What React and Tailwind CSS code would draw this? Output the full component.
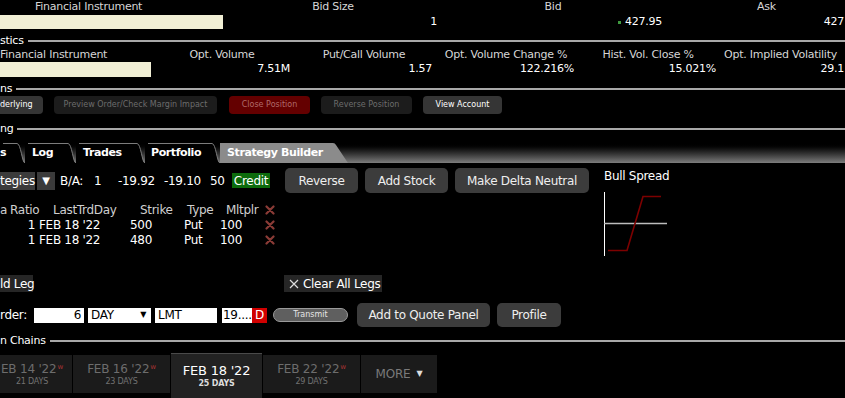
import React from 'react';

const RedX = () => (
  <svg width="10" height="10" viewBox="0 0 10 10">
    <path d="M1.5 1.5 L8.5 8.5 M8.5 1.5 L1.5 8.5" stroke="#8a3b36" strokeWidth="2.2" strokeLinecap="round" />
  </svg>
);

const Section = ({ label }) => (
  <div className="flex h-[14px] items-center">
    <span className="pr-[4px] text-white">{label}</span>
    <div className="h-[2px] flex-1 bg-[#a8a8a8]" />
  </div>
);

const Tab = ({ label, w, className, active }) => (
  <div className={`relative flex h-[20px] shrink-0 items-center font-bold text-white ${className}`}>
    <svg className="absolute left-0 top-0" width={w} height="20" viewBox={`0 0 ${w} 20`}>
      {active ? (
        <path d={`M0 20 L0 0 L${w - 15} 0 Q${w - 13} 0 ${w - 12} 2 L${w} 20 Z`} fill="#8b8b8b" />
      ) : (
        <>
          <path d={`M0 20 L0 0.5 L${w - 8} 0.5 C${w - 4} 0.5 ${w - 3} 20 ${w} 20 Z`} fill="#000" />
          <path d={`M3 0.5 L${w - 8} 0.5 C${w - 4} 0.5 ${w - 3} 20 ${w} 20`} fill="none" stroke="#7c7c7c" />
        </>
      )}
    </svg>
    <span className="relative">{label}</span>
  </div>
);

const Expiry = ({ date, days, className, active, weekly }) => (
  <div
    className={`flex shrink-0 flex-col items-center justify-center ${
      active ? 'h-[45px] border-t border-[#4a4a4a] bg-[#222]' : 'mt-[2px] h-[38px] bg-[#1b1b1b]'
    } ${className}`}
  >
    <div className={`leading-[14px] ${active ? 'text-[13px] text-white' : 'text-[12px] text-[#6d6d6d]'}`}>
      {date}
      {weekly && <sup className="ml-[1px] text-[7px] text-[#a33]">w</sup>}
    </div>
    <div className={`mt-[1px] text-[8px] leading-[10px] ${active ? 'font-bold text-[#ddd]' : 'text-[#727272]'}`}>{days}</div>
  </div>
);

const legs = [
  { strike: '500' },
  { strike: '480' },
];

export default function App() {
  return (
    <div className="h-[398px] w-[845px] overflow-hidden bg-black font-['DejaVu_Sans',sans-serif] text-[11px] tracking-[-0.25px] text-white">
      {/* quote header */}
      <div className="flex h-[15px] items-center whitespace-nowrap text-[#d6d6d6]">
        <div className="w-[223px] shrink-0 pl-[35px]">Financial Instrument</div>
        <div className="w-[220px] shrink-0 text-center">Bid Size</div>
        <div className="w-[220px] shrink-0 text-center">Bid</div>
        <div className="w-[182px] shrink-0 pl-[94px]">Ask</div>
      </div>
      <div className="flex h-[14px] items-center whitespace-nowrap">
        <div className="h-[14px] w-[223px] shrink-0 bg-[#f1efd5]" />
        <div className="w-[220px] shrink-0 pr-[6px] text-right">1</div>
        <div className="flex w-[220px] shrink-0 items-center justify-end pr-[1px]">
          <span className="mr-[4px] h-[3px] w-[3px] bg-[#3f9a3f]" />
          427.95
        </div>
        <div className="w-[182px] shrink-0 pr-[1px] text-right">427</div>
      </div>

      <div className="mt-[5px]">
        <Section label="stics" />
      </div>
      <div className="flex h-[14px] items-center whitespace-nowrap text-[#d6d6d6]">
        <div className="w-[151px] shrink-0">Financial Instrument</div>
        <div className="w-[142px] shrink-0 text-center">Opt. Volume</div>
        <div className="w-[142px] shrink-0 text-center">Put/Call Volume</div>
        <div className="w-[142px] shrink-0 text-center">Opt. Volume Change %</div>
        <div className="w-[142px] shrink-0 text-center">Hist. Vol. Close %</div>
        <div className="w-[126px] shrink-0 pl-[5px]">Opt. Implied Volatility</div>
      </div>
      <div className="flex h-[15px] items-center whitespace-nowrap">
        <div className="h-[15px] w-[151px] shrink-0 bg-[#f1efd5]" />
        <div className="w-[142px] shrink-0 pr-[3px] text-right">7.51M</div>
        <div className="w-[142px] shrink-0 pr-[3px] text-right">1.57</div>
        <div className="w-[142px] shrink-0 pr-[3px] text-right">122.216%</div>
        <div className="w-[142px] shrink-0 pr-[3px] text-right">15.021%</div>
        <div className="w-[126px] shrink-0 pr-[1px] text-right">29.1</div>
      </div>

      <div className="mt-[5px]">
        <Section label="ns" />
      </div>
      <div className="flex h-[18px] items-center whitespace-nowrap text-[8px] tracking-normal">
        <div className="flex h-[18px] w-[43px] shrink-0 items-center rounded-r-[4px] bg-[#353535] text-white">derlying</div>
        <div className="ml-[11px] flex h-[18px] w-[163px] shrink-0 items-center justify-center rounded-[4px] bg-[#1c1c1c] text-[#6c6c6c]">
          Preview Order/Check Margin Impact
        </div>
        <div className="ml-[12px] flex h-[18px] w-[81px] shrink-0 items-center justify-center rounded-[4px] bg-[#640000] text-[#b06a6a]">
          Close Position
        </div>
        <div className="ml-[11px] flex h-[18px] w-[91px] shrink-0 items-center justify-center rounded-[4px] bg-[#1c1c1c] text-[#6c6c6c]">
          Reverse Position
        </div>
        <div className="ml-[11px] flex h-[18px] w-[79px] shrink-0 items-center justify-center rounded-[4px] bg-[#353535] text-white">
          View Account
        </div>
      </div>

      <div className="mt-[8px]">
        <Section label="ng" />
      </div>

      {/* tab strip */}
      <div className="flex h-[27px] items-end bg-linear-to-b from-black from-25% to-[#7e7e7e] text-[11px] tracking-[-0.4px]">
        <Tab label="s" w={25} className="w-[25px]" />
        <Tab label="Log" w={51} className="w-[51px] pl-[7px]" />
        <Tab label="Trades" w={69} className="w-[69px] pl-[7px]" />
        <Tab label="Portfolio" w={75} className="w-[75px] pl-[6px]" />
        <Tab label="Strategy Builder" w={128} className="w-[128px] pl-[7px]" active />
      </div>

      {/* strategy builder body */}
      <div className="flex">
        <div className="w-[600px] shrink-0">
          <div className="mt-[5px] flex h-[25px] items-center whitespace-nowrap text-[12px] tracking-[-0.3px]">
            <div className="flex h-[18px] w-[35px] shrink-0 items-center bg-[#3b3b3b]">tegies</div>
            <div className="ml-[2px] flex h-[18px] w-[18px] shrink-0 items-center justify-center bg-[#3b3b3b] text-[10px]">▼</div>
            <span className="ml-[5px] w-[34px] shrink-0">B/A:</span>
            <span className="w-[24px] shrink-0">1</span>
            <span className="w-[46px] shrink-0">-19.92</span>
            <span className="w-[46px] shrink-0">-19.10</span>
            <span className="w-[22px] shrink-0">50</span>
            <span className="flex h-[15px] w-[38px] shrink-0 items-center justify-center bg-[#0c6b0c]">Credit</span>
            <button className="ml-[15px] h-[25px] w-[73px] shrink-0 rounded-[5px] bg-[#3c3c3c] text-[#eee]">Reverse</button>
            <button className="ml-[7px] h-[25px] w-[83px] shrink-0 rounded-[5px] bg-[#3c3c3c] text-[#eee]">Add Stock</button>
            <button className="ml-[7px] h-[25px] w-[134px] shrink-0 rounded-[5px] bg-[#3c3c3c] text-[#eee]">Make Delta Neutral</button>
          </div>

          {/* legs table */}
          <div className="mt-[10px] text-[12px] tracking-[-0.3px]">
            <div className="flex h-[14px] items-center whitespace-nowrap text-[#cfcfcf]">
              <div className="w-[39px] shrink-0">
                a<span className="ml-[3px]">Ratio</span>
              </div>
              <div className="w-[88px] shrink-0 pl-[14px]">LastTrdDay</div>
              <div className="w-[55px] shrink-0 pl-[13px]">Strike</div>
              <div className="w-[36px] shrink-0 pl-[5px]">Type</div>
              <div className="w-[47px] shrink-0 pl-[8px]">Mltplr</div>
              <RedX />
            </div>
            {legs.map((l) => (
              <div key={l.strike} className="flex h-[15px] items-center whitespace-nowrap">
                <div className="w-[39px] shrink-0 pr-[4px] text-right">1</div>
                <div className="w-[88px] shrink-0">FEB 18 '22</div>
                <div className="w-[55px] shrink-0 pl-[3px]">{l.strike}</div>
                <div className="w-[36px] shrink-0 pl-[2px]">Put</div>
                <div className="w-[47px] shrink-0 pl-[2px]">100</div>
                <RedX />
              </div>
            ))}
          </div>

          <div className="mt-[28px] flex h-[17px] items-center whitespace-nowrap text-[12px] tracking-[-0.3px]">
            <div className="flex h-[17px] w-[33px] shrink-0 items-center bg-[#262626]">ld Leg</div>
            <div className="ml-[251px] flex h-[17px] w-[98px] shrink-0 items-center gap-[4px] bg-[#262626] pl-[5px]">
              <svg width="10" height="10" viewBox="0 0 10 10">
                <path d="M1 1 L9 9 M9 1 L1 9" stroke="#ddd" strokeWidth="1.2" />
              </svg>
              Clear All Legs
            </div>
          </div>

          <div className="mt-[11px] flex h-[24px] items-center whitespace-nowrap text-[12px] tracking-[-0.3px]">
            <span className="w-[34px] shrink-0">rder:</span>
            <div className="flex h-[15px] w-[50px] shrink-0 items-center justify-end bg-white pr-[3px] text-black">6</div>
            <div className="ml-[4px] flex h-[15px] w-[63px] shrink-0 items-center justify-between bg-white pl-[3px] pr-[5px] text-black">
              DAY<span className="text-[8px]">▼</span>
            </div>
            <div className="ml-[4px] flex h-[15px] w-[62px] shrink-0 items-center bg-white pl-[3px] text-black">LMT</div>
            <div className="ml-[5px] flex h-[15px] w-[30px] shrink-0 items-center bg-white pl-[1px] text-black">19....</div>
            <div className="flex h-[15px] w-[15px] shrink-0 items-center justify-center bg-[#d00000] text-white">D</div>
            <div className="ml-[6px] flex h-[14px] w-[75px] shrink-0 items-center justify-center rounded-full border border-[#9a9a9a] bg-[#5f5f5f] text-[8px] tracking-normal text-[#e6e6e6]">
              Transmit
            </div>
            <button className="ml-[9px] h-[24px] w-[133px] shrink-0 rounded-[5px] bg-[#3c3c3c] text-[#eee]">Add to Quote Panel</button>
            <button className="ml-[7px] h-[24px] w-[64px] shrink-0 rounded-[5px] bg-[#3c3c3c] text-[#eee]">Profile</button>
          </div>
        </div>

        {/* payoff chart */}
        <div className="pl-[4px] pt-[6px]">
          <div className="h-[14px] whitespace-nowrap text-[12px] leading-[14px] tracking-[-0.3px]">Bull Spread</div>
          <svg className="mt-[8px]" width="70" height="68" viewBox="0 0 70 68">
            <line x1="0.5" y1="1" x2="0.5" y2="65" stroke="#fff" />
            <line x1="0" y1="32.5" x2="63" y2="32.5" stroke="#bdbdbd" strokeWidth="1.3" />
            <polyline points="4,59.5 23,59.5 39,5.5 57,5.5" fill="none" stroke="#7d0000" strokeWidth="1.6" />
          </svg>
        </div>
      </div>

      <div className="mt-[7px]">
        <Section label="n Chains" />
      </div>

      <div className="mt-[5px] flex items-start gap-px whitespace-nowrap tracking-[-0.2px]">
        <Expiry date="EB 14 '22" days="21 DAYS" weekly className="w-[72px] pr-[8px]" />
        <Expiry date="FEB 16 '22" days="23 DAYS" weekly className="w-[97px]" />
        <Expiry date="FEB 18 '22" days="25 DAYS" active className="w-[91px]" />
        <Expiry date="FEB 22 '22" days="29 DAYS" weekly className="w-[97px]" />
        <div className="mt-[2px] flex h-[38px] w-[76px] shrink-0 items-center justify-center gap-[6px] bg-[#1b1b1b] text-[12px] text-[#7a7a7a]">
          MORE<span className="text-[8px] text-[#ddd]">▼</span>
        </div>
      </div>
    </div>
  );
}
